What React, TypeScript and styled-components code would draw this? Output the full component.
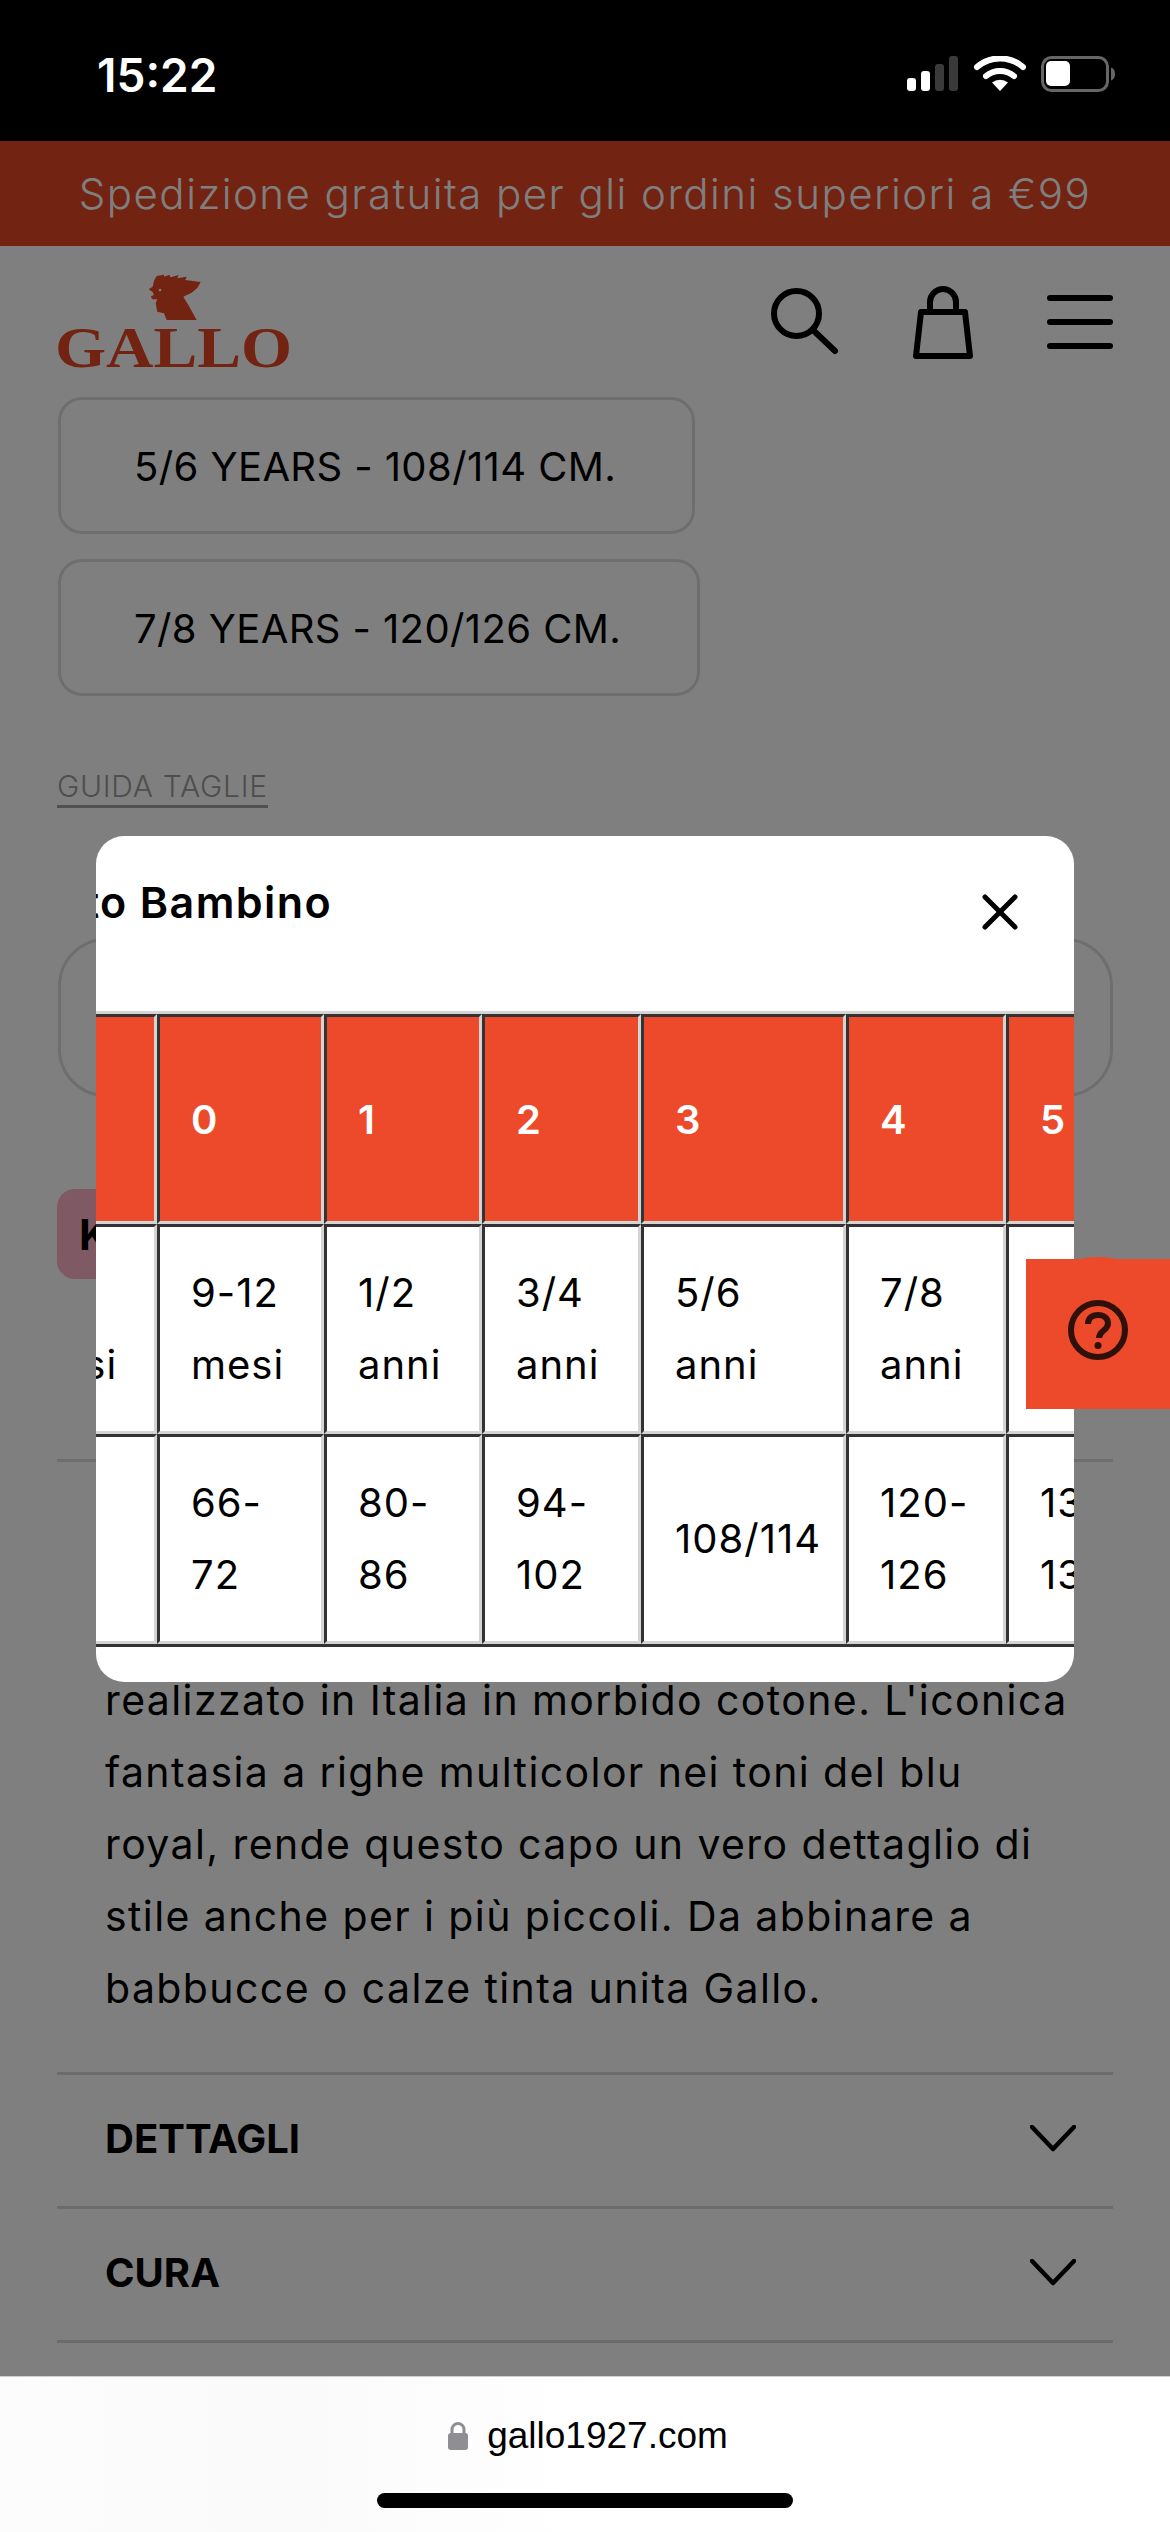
import styled, { createGlobalStyle } from "styled-components";

const GlobalStyle = createGlobalStyle`
  html, body {
    margin: 0;
    padding: 0;
    background: #fff;
  }
  * {
    box-sizing: border-box;
  }
`;

const sizes = ["5/6 YEARS - 108/114 CM.", "7/8 YEARS - 120/126 CM."];

const description = [
  "realizzato in Italia in morbido cotone. L'iconica",
  "fantasia a righe multicolor nei toni del blu",
  "royal, rende questo capo un vero dettaglio di",
  "stile anche per i più piccoli. Da abbinare a",
  "babbucce o calze tinta unita Gallo.",
];

const columnWidths = [167, 167, 158, 159, 205, 160, 160];
const tableHead = ["00", "0", "1", "2", "3", "4", "5"];
const tableRows = [
  ["6-9 mesi", "9-12 mesi", "1/2 anni", "3/4 anni", "5/6 anni", "7/8 anni", "9/10 anni"],
  ["60-66", "66-72", "80-86", "94-102", "108/114", "120-126", "132-138"],
];

export default function App() {
  return (
    <Screen>
      <GlobalStyle />
      <StatusBar>
        <Clock>15:22</Clock>
        <svg width="208" height="36" viewBox="0 0 208 36">
          <rect x="0" y="22" width="9" height="13" rx="3" fill="#fff" />
          <rect x="14" y="15" width="9" height="20" rx="3" fill="#fff" />
          <rect x="28" y="8" width="9" height="27" rx="3" fill="#3a3a3a" />
          <rect x="42" y="0" width="9" height="35" rx="3" fill="#3a3a3a" />
          <path d="M70 11a35 35 0 0 1 46 0" fill="none" stroke="#fff" strokeWidth="6" strokeLinecap="round" />
          <path d="M79 20a22 22 0 0 1 28 0" fill="none" stroke="#fff" strokeWidth="6" strokeLinecap="round" />
          <path d="M85 26.5a13 13 0 0 1 16 0L93 35z" fill="#fff" />
          <rect x="135.5" y="1.5" width="65" height="33" rx="9" fill="none" stroke="#666" strokeWidth="3" />
          <rect x="139" y="5" width="24" height="25" rx="5" fill="#fff" />
          <path d="M204 11.5c3 1 4 3.500 4 6.500s-1 5.500-4 6.500z" fill="#666" />
        </svg>
      </StatusBar>

      <PageArea>
        <Banner>Spedizione gratuita per gli ordini superiori a €99</Banner>
        <Header>
          <Logo>
            <svg width="236" height="98" viewBox="0 0 236 98">
              <g transform="translate(-17 -13) scale(0.3333)">
                <path
                  fillRule="evenodd"
                  d="M326 88L338 80L342 62L350 48L372 44L373 50L388 44L392 52L416 45L412 55L440 50L436 60L482 66L472 84L455 98L430 110L445 135L470 180L380 180L372 160L352 155L347 130L352 118L338 118L332 110L342 104L338 96ZM360 86a4 4 0 1 0 .1 0Z"
                  fill="#e64624"
                />
              </g>
              <LogoText x="-2" y="94" textLength="237" lengthAdjust="spacingAndGlyphs">
                GALLO
              </LogoText>
            </svg>
          </Logo>
          <HeaderIcons>
            <svg width="68" height="68" viewBox="0 0 68 68">
              <circle cx="25.500" cy="25.500" r="22.500" fill="none" stroke="#000" strokeWidth="6" />
              <path d="M42 42l22 21" fill="none" stroke="#000" strokeWidth="6" strokeLinecap="round" />
            </svg>
            <svg width="60" height="74" viewBox="0 0 60 74">
              <path d="M8 27h44l5 44H3z" fill="none" stroke="#000" strokeWidth="6" strokeLinejoin="round" />
              <path d="M17 27v-10a13 13 0 0 1 26 0v10" fill="none" stroke="#000" strokeWidth="6" />
            </svg>
            <svg width="66" height="54" viewBox="0 0 66 54">
              <path d="M3 3h60M3 27h60M3 51h60" fill="none" stroke="#000" strokeWidth="6" strokeLinecap="round" />
            </svg>
          </HeaderIcons>
        </Header>

        <Content>
          <SizeList>
            {sizes.map((size) => (
              <SizeButton key={size}>{size}</SizeButton>
            ))}
          </SizeList>
          <GuideLink>GUIDA TAGLIE</GuideLink>
          <AddButton />
          <KlarnaBadge>Klarna.</KlarnaBadge>
          <Divider />
          <Description>
            {description.map((line) => (
              <DescriptionLine key={line}>{line}</DescriptionLine>
            ))}
          </Description>
          <Accordion>
            <AccordionRow>
              DETTAGLI
              <Chevron />
            </AccordionRow>
            <AccordionRow>
              CURA
              <Chevron />
            </AccordionRow>
          </Accordion>
        </Content>

        <Overlay />

        <Modal>
          <ModalHeader>
            <TitleClip>
              <ModalTitle>Abbigliamento Bambino</ModalTitle>
            </TitleClip>
            <CloseButton>
              <svg width="36" height="36" viewBox="0 0 36 36">
                <path d="M3 3l30 30M33 3L3 33" fill="none" stroke="#000" strokeWidth="5" strokeLinecap="round" />
              </svg>
            </CloseButton>
          </ModalHeader>
          <TableClip>
            <SizeTable>
              <colgroup>
                {columnWidths.map((width, i) => (
                  <col key={i} style={{ width }} />
                ))}
              </colgroup>
              <thead>
                <tr>
                  {tableHead.map((cell) => (
                    <HeadCell key={cell}>{cell}</HeadCell>
                  ))}
                </tr>
              </thead>
              <tbody>
                {tableRows.map((row) => (
                  <tr key={row[0]}>
                    {row.map((cell) => (
                      <BodyCell key={cell}>{cell}</BodyCell>
                    ))}
                  </tr>
                ))}
              </tbody>
            </SizeTable>
          </TableClip>
        </Modal>

        <HelpButton>
          <svg width="60" height="60" viewBox="0 0 60 60">
            <circle cx="30" cy="30" r="27" fill="none" stroke="#2f100a" strokeWidth="6" />
            <path
              d="M20 24c0-6 4-9 10-9s10 3.500 10 8.500c0 7-9 7-9 14.500"
              fill="none"
              stroke="#2f100a"
              strokeWidth="6"
            />
            <circle cx="30" cy="45.500" r="3.500" fill="#2f100a" />
          </svg>
        </HelpButton>
      </PageArea>

      <BottomBar>
        <UrlRow>
          <svg width="20" height="28" viewBox="0 0 20 28">
            <path d="M4 13V7.500a6 6 0 0 1 12 0V13" fill="none" stroke="#8e8e93" strokeWidth="3" />
            <rect x="0" y="11" width="20" height="17" rx="3" fill="#8e8e93" />
          </svg>
          gallo1927.com
        </UrlRow>
        <HomeIndicator />
      </BottomBar>
    </Screen>
  );
}

function Chevron() {
  return (
    <svg width="46" height="27" viewBox="0 0 46 27">
      <path d="M2 2l21 22L44 2" fill="none" stroke="#000" strokeWidth="4.500" strokeLinecap="round" strokeLinejoin="round" />
    </svg>
  );
}

const Screen = styled.div`
  width: 1170px;
  height: 2532px;
  display: flex;
  flex-direction: column;
  overflow: hidden;
  background: #fff;
  font-family: Inter, "Liberation Sans", sans-serif;
  color: #000;
`;

const StatusBar = styled.div`
  height: 141px;
  flex-shrink: 0;
  background: #000;
  display: flex;
  justify-content: space-between;
  align-items: flex-start;
  padding: 56px 55px 0 97px;
`;

const Clock = styled.span`
  color: #fff;
  font-size: 46px;
  font-weight: 600;
  line-height: 38px;
`;

const PageArea = styled.div`
  position: relative;
  flex: 1;
  overflow: hidden;
`;

const Banner = styled.div`
  height: 105px;
  background: #e64624;
  color: #fff;
  display: flex;
  align-items: center;
  justify-content: center;
  font-size: 42px;
  font-weight: 300;
  letter-spacing: 1.47px;
  white-space: nowrap;
`;

const Header = styled.header`
  height: 151px;
  display: flex;
  justify-content: space-between;
  align-items: flex-start;
  padding: 27px 57px 0 57px;
`;

const Logo = styled.div`
  display: flex;
`;

const LogoText = styled.text`
  font-family: "Liberation Serif", serif;
  font-weight: 700;
  font-size: 56px;
  fill: #e64624;
`;

const HeaderIcons = styled.div`
  display: flex;
  align-items: center;
  gap: 74px;
  padding-top: 12px;
`;

const Content = styled.main`
  padding: 0 57px 0 58px;
`;

const SizeList = styled.div`
  display: flex;
  flex-direction: column;
  align-items: flex-start;
  gap: 25px;
`;

const SizeButton = styled.div`
  height: 137px;
  padding: 2px 76px 0 73px;
  display: flex;
  align-items: center;
  border: 3px solid #dcdcdc;
  border-radius: 24px;
  font-size: 40px;
  letter-spacing: 0.4px;
  white-space: nowrap;
`;

const GuideLink = styled.div`
  display: table;
  margin: 74px 0 0 -1px;
  padding-bottom: 2px;
  border-bottom: 3px solid #a0a0a0;
  color: #9c9c9c;
  font-size: 30px;
  line-height: 33px;
  font-weight: 300;
  letter-spacing: 0.7px;
`;

const AddButton = styled.div`
  height: 159px;
  margin-top: 130px;
  border: 3px solid #dcdcdc;
  border-radius: 48px;
`;

const KlarnaBadge = styled.div`
  width: 200px;
  height: 90px;
  margin: 92px 0 0 -1px;
  padding-left: 22px;
  display: flex;
  align-items: center;
  background: #ffb3c7;
  border-radius: 18px;
  font-size: 42px;
  font-weight: 700;
`;

const Divider = styled.div`
  height: 3px;
  margin: 180px 0 0 -1px;
  background: #dcdcdc;
`;

const Description = styled.div`
  margin: 202px 0 0 47px;
  font-size: 41px;
  line-height: 72px;
  letter-spacing: 1.4px;
`;

const DescriptionLine = styled.div`
  white-space: nowrap;
`;

const Accordion = styled.div`
  margin: 48px 0 0 -1px;
  border-top: 3px solid #d8d8de;
`;

const AccordionRow = styled.div`
  height: 134px;
  padding: 0 37px 4px 48px;
  display: flex;
  align-items: center;
  justify-content: space-between;
  border-bottom: 3px solid #d8d8de;
  font-size: 40px;
  font-weight: 700;
`;

const Overlay = styled.div`
  position: absolute;
  inset: 0;
  background: rgba(0, 0, 0, 0.5);
`;

const Modal = styled.div`
  position: absolute;
  top: 695px;
  left: 96px;
  width: 978px;
  height: 846px;
  background: #fff;
  border-radius: 28px;
  overflow: hidden;
`;

const ModalHeader = styled.div`
  height: 175px;
  display: flex;
  justify-content: space-between;
  align-items: flex-start;
  padding: 37px 56px 0 0;
`;

const TitleClip = styled.div`
  width: 236px;
  display: flex;
  justify-content: flex-end;
`;

const ModalTitle = styled.div`
  flex-shrink: 0;
  font-size: 43px;
  line-height: 58px;
  font-weight: 600;
  letter-spacing: 1.4px;
  white-space: nowrap;
`;

const CloseButton = styled.div`
  display: flex;
  margin-top: 21px;
`;

const TableClip = styled.div`
  overflow: hidden;
`;

const SizeTable = styled.table`
  width: 1176px;
  margin-left: -106px;
  table-layout: fixed;
  border-collapse: separate;
  border-spacing: 0;
  border-top: 3px solid #d4d4d4;
  border-bottom: 3px solid #333;
`;

const HeadCell = styled.th`
  height: 210px;
  padding: 0 31px;
  background: #ec4a2a;
  background-clip: padding-box;
  border-style: solid;
  border-width: 3px;
  border-color: #333 #d4d4d4 #d4d4d4 #333;
  color: #fff;
  font-size: 40px;
  font-weight: 600;
  text-align: left;
`;

const BodyCell = styled.td`
  height: 210px;
  padding: 0 28px 0 31px;
  border-style: solid;
  border-width: 3px;
  border-color: #333 #d4d4d4 #d4d4d4 #333;
  font-size: 40px;
  line-height: 72px;
  letter-spacing: 1px;
  text-align: left;
  vertical-align: middle;
`;

const HelpButton = styled.div`
  position: absolute;
  top: 1118px;
  right: 0;
  width: 144px;
  height: 150px;
  background: #ec4a2a;
  display: flex;
  align-items: center;
  justify-content: center;
  padding-bottom: 8px;

  &::before {
    content: "";
    position: absolute;
    top: -2px;
    left: 52px;
    width: 40px;
    height: 8px;
    border-radius: 50%;
    background: #ec4a2a;
  }
`;

const BottomBar = styled.div`
  height: 156px;
  flex-shrink: 0;
  display: flex;
  flex-direction: column;
  align-items: center;
  border-top: 1px solid #d0d0d0;
  background: linear-gradient(90deg, #fcfcfc 0%, #fafafa 25%, #fff 50%, #fff 100%);
`;

const UrlRow = styled.div`
  height: 42px;
  margin-top: 38px;
  padding-left: 6px;
  display: flex;
  align-items: center;
  gap: 19px;
  font-family: "Liberation Sans", Arial, sans-serif;
  font-size: 37px;
`;

const HomeIndicator = styled.div`
  width: 416px;
  height: 15px;
  margin-top: 36px;
  border-radius: 8px;
  background: #000;
`;
